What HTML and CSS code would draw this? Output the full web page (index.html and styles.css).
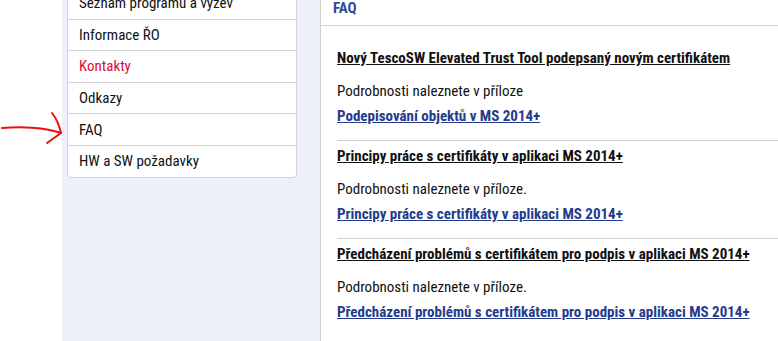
FILE: index.html
```html
<!DOCTYPE html>
<html>
    <head>
        <meta charset="utf-8" />
        <title>FAQ</title>
        <link rel="stylesheet" href="styles.css">
    </head>
    <body>
        <div class="page">
            <div class="gutter">
                <!-- rucne kreslena sipka -->
                <svg class="arrow" width="64" height="40" viewBox="0 0 64 40">
                    <path d="M2 18 C 20 16.5, 45 17, 61 23" />
                    <path d="M52 3 C 56 8, 59 14, 61 23 L 47 33" />
                </svg>
            </div>

            <div class="sidebar">
                <ul class="menu">
                    <li>Seznam programů a výzev</li>
                    <li>Informace ŘO</li>
                    <li class="active">Kontakty</li>
                    <li>Odkazy</li>
                    <li>FAQ</li>
                    <li>HW a SW požadavky</li>
                </ul>
            </div>

            <div class="main">
                <h2 class="main-title">FAQ</h2>

                <div class="faq-list">
                    <div class="faq-item">
                        <div class="faq-question">Nový TescoSW Elevated Trust Tool podepsaný novým certifikátem</div>
                        <div class="faq-answer">Podrobnosti naleznete v příloze</div>
                        <a class="faq-link" href="#">Podepisování objektů v MS 2014+</a>
                    </div>

                    <div class="faq-item">
                        <div class="faq-question">Principy práce s certifikáty v aplikaci MS 2014+</div>
                        <div class="faq-answer">Podrobnosti naleznete v příloze.</div>
                        <a class="faq-link" href="#">Principy práce s certifikáty v aplikaci MS 2014+</a>
                    </div>

                    <div class="faq-item">
                        <div class="faq-question">Předcházení problémů s certifikátem pro podpis v aplikaci MS 2014+</div>
                        <div class="faq-answer">Podrobnosti naleznete v příloze.</div>
                        <a class="faq-link" href="#">Předcházení problémů s certifikátem pro podpis v aplikaci MS 2014+</a>
                    </div>
                </div>
            </div>
        </div>
    </body>
</html>
```

FILE: styles.css
```css
* {
    box-sizing: border-box;
    margin: 0;
    padding: 0;
}

body {
    font-family: Roboto, "Liberation Sans", sans-serif;
    font-stretch: condensed;
    font-size: 15px;
    color: #111;
    background-color: #fff;
    height: 341px;
    overflow: hidden;
}

/* stranka je odscrollovana o kousek dolu */
.page {
    display: flex;
    margin-top: -12px;
    min-height: 360px;
}

.gutter {
    position: relative;
    width: 62px;
    flex-shrink: 0;
}

.arrow {
    position: absolute;
    left: 0;
    top: 122px;
}

.arrow path {
    fill: none;
    stroke: #f20d0d;
    stroke-width: 2;
    stroke-linecap: round;
    stroke-linejoin: round;
}

.sidebar {
    width: 259px;
    flex-shrink: 0;
    padding: 0 23px 0 5px;
    background-color: #ecf0fb;
    border-right: 1px solid #cfcfcf;
}

.menu {
    list-style: none;
    background-color: #fff;
    border: 1px solid #d4d4d4;
    border-top: none;
    border-radius: 0 0 4px 4px;
}

.menu li {
    padding: 6.3px 11px;
    line-height: 18px;
    border-bottom: 1px solid #d4d4d4;
}

.menu li:last-child {
    border-bottom: none;
}

.menu li.active {
    color: #dc0a3c;
}

.main {
    flex: 1;
}

.main-title {
    font-size: 15px;
    font-weight: bold;
    line-height: 18px;
    color: #2c4a9a;
    padding: 10.5px 12px 8.5px;
    border-bottom: 1px solid #d0d0d0;
}

.faq-list {
    padding: 17px 0 0 16px;
}

.faq-item {
    padding: 6px 0 15px;
    border-top: 1px solid #d0d0d0;
}

.faq-item:first-child {
    border-top: none;
}

.faq-question {
    display: inline-block;
    font-weight: bold;
    line-height: 18px;
    text-decoration: underline;
}

.faq-answer {
    margin-top: 15px;
    line-height: 18px;
}

.faq-link {
    display: inline-block;
    margin-top: 7px;
    font-weight: bold;
    line-height: 18px;
    color: #243b8c;
}
```
